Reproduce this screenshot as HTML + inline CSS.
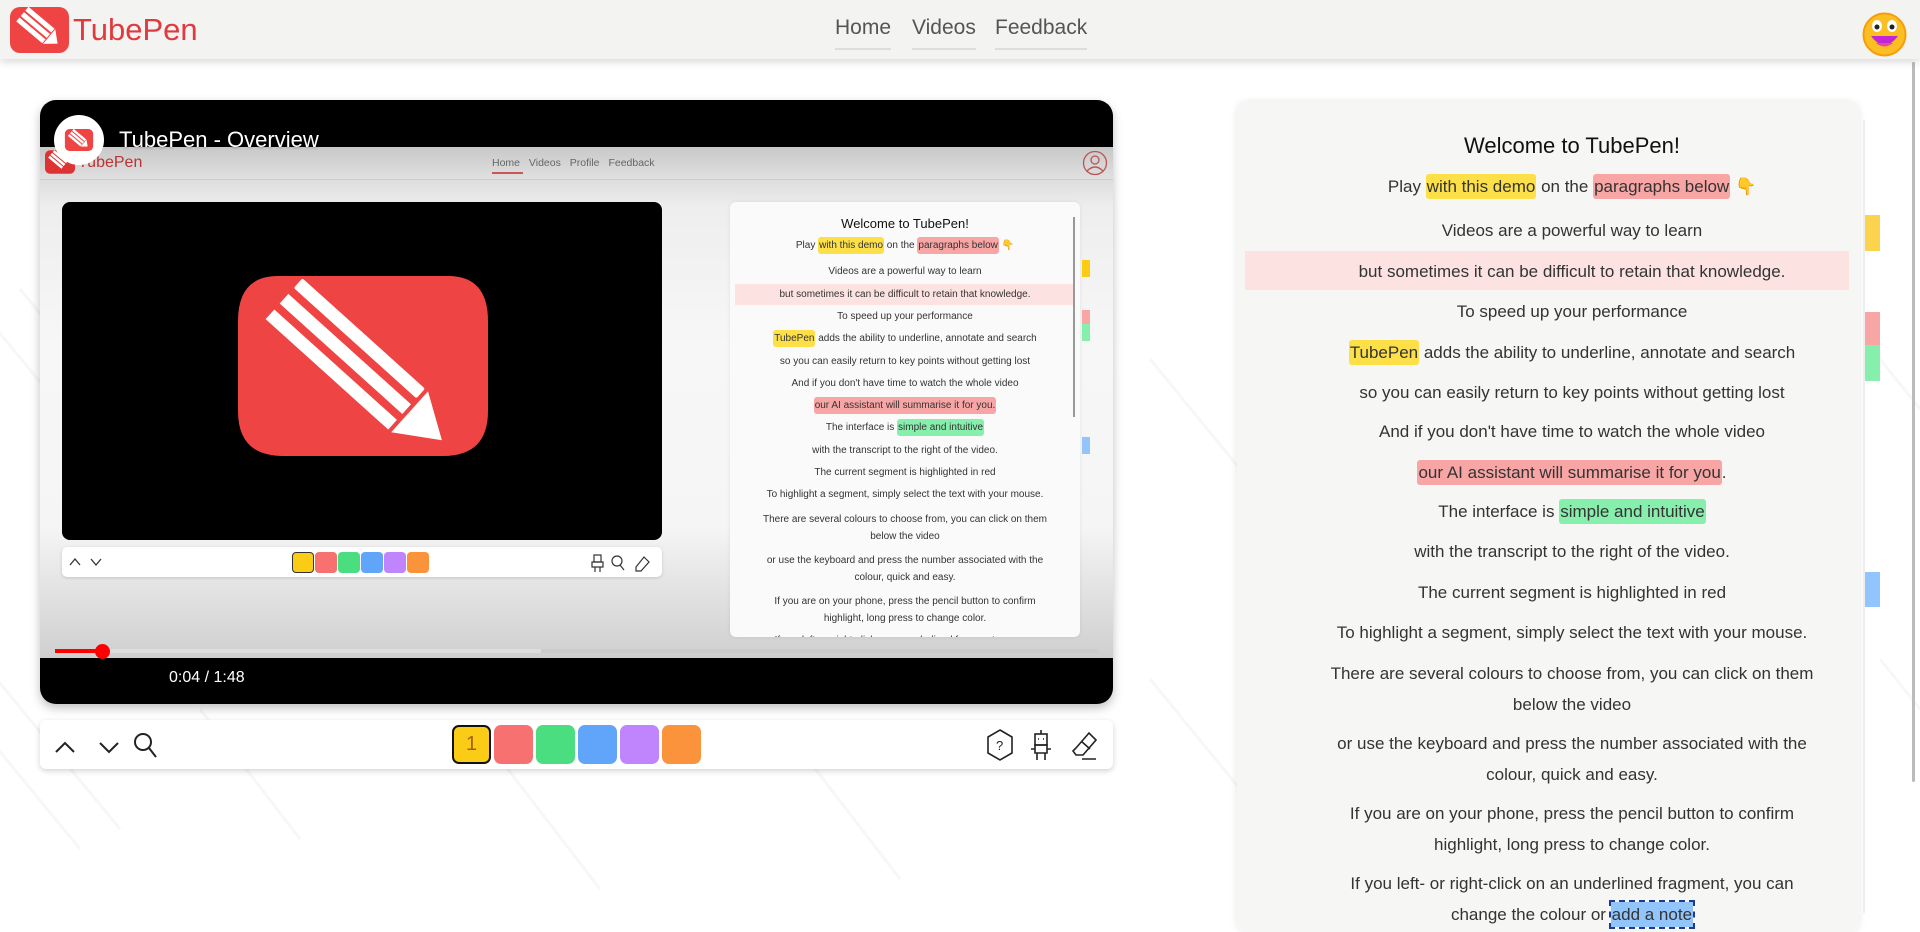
<!DOCTYPE html>
<html><head><meta charset="utf-8"><style>
*{box-sizing:border-box;margin:0;padding:0}
body{width:1920px;height:913px;overflow:hidden;background:#fff;font-family:"Liberation Sans",sans-serif;position:relative}
.abs{position:absolute}
.hdr{left:0;top:0;width:1920px;height:59px;background:#f3f3f1;box-shadow:0 3px 8px rgba(0,0,0,.15);z-index:2}
.nav a{position:absolute;top:16px;font-size:21px;color:#555;text-decoration:none;padding-bottom:8px;border-bottom:2px solid #ddd}
.vid{left:40px;top:100px;width:1073px;height:604px;background:#000;border-radius:16px;overflow:hidden;box-shadow:0 4px 10px rgba(0,0,0,.25)}
.tb{left:40px;top:720px;width:1073px;height:49px;background:#fff;border-radius:6px;box-shadow:0 2px 6px rgba(0,0,0,.18)}
.sw{position:absolute;top:5px;width:39px;height:39px;border-radius:7px}
.panel{left:1237px;top:102px;width:622px;height:830px;background:#f6f6f4;border-radius:10px;box-shadow:0 0 8px rgba(0,0,0,.1)}
.ln{position:absolute;left:0;width:622px;padding-left:48px;text-align:center;font-size:17px;color:#333;line-height:22px}
.y{background:#fde047;padding:3px 1px;border-radius:3px}
.r{background:#f8a5a5;padding:3px 1px;border-radius:3px}
.g{background:#86efac;padding:3px 1px;border-radius:3px}
.b{background:#93c5fd;padding:3px 1px;outline:2px dashed #1e3a8a}
.mln{position:absolute;left:0;width:350px;text-align:center;font-size:10px;color:#333;line-height:13px}
.msw{position:absolute;top:5px;width:22px;height:21px;border-radius:4px}
</style></head><body>
<svg class="abs" style="left:0;top:59px" width="1920" height="854">
<g stroke="#f7f7f7" stroke-width="3" fill="none">
<path d="M-20 250 L120 420 M20 230 L160 400 M-60 620 L80 790 M-20 600 L120 770 M1150 300 L1240 410 M1150 620 L1240 730 M200 650 L300 780 M500 700 L600 830 M800 690 L900 820 M1880 300 L1920 350 M1880 600 L1920 650"/>
</g></svg>

<div class="abs hdr">
<svg class="abs" style="left:10px;top:7px" width="59" height="46" viewBox="0 0 59 46"><rect x="0" y="0" width="59" height="46" rx="10" fill="#ef4444"/><g fill="#fff" transform="rotate(40 29 23)"><rect x="6" y="12" width="34" height="5"/><rect x="6" y="19" width="34" height="5"/><rect x="6" y="26" width="34" height="5"/><polygon points="41,12 52,21.5 41,31"/></g></svg>
<div class="abs" style="left:73px;top:12px;font-size:31px;color:#e03a3e">TubePen</div>
<div class="nav"><a style="left:835px">Home</a><a style="left:912px">Videos</a><a style="left:995px">Feedback</a></div>
<svg class="abs" style="left:1862px;top:12px" width="45" height="45" viewBox="0 0 45 45"><circle cx="22.5" cy="22.5" r="21" fill="#fbbf24"/><circle cx="22.5" cy="22.5" r="21" fill="none" stroke="#f59e0b" stroke-width="2"/><ellipse cx="15" cy="14" rx="5" ry="6" fill="#fff"/><ellipse cx="30" cy="14" rx="5" ry="6" fill="#fff"/><circle cx="15" cy="15" r="2.5" fill="#222"/><circle cx="30" cy="15" r="2.5" fill="#222"/><path d="M9 24 Q22.5 42 36 24 Z" fill="#c026d3"/><path d="M14 31 Q22.5 38 31 31" fill="#ec4899"/></svg>
</div>
<div class="abs" style="left:1912px;top:62px;width:3px;height:720px;background:#bbb;border-radius:2px"></div>

<div class="abs vid">
 <div class="abs" style="left:0;top:47px;width:1073px;height:511px;background:linear-gradient(#c9c9c9 0,#eee 60px,#f7f7f7 200px,#f5f5f5 380px,#cfcfcf 511px)"></div>
 <div class="abs" style="left:0;top:47px;width:1073px;height:33px;background:linear-gradient(#c8c8c8,#e0e0e0);border-bottom:1px solid #ccc"></div>
 <svg class="abs" style="left:5px;top:50px" width="30" height="24" viewBox="0 0 59 46"><rect width="59" height="46" rx="10" fill="#d33"/><g fill="#fff" transform="rotate(40 29 23)"><rect x="6" y="12" width="34" height="5"/><rect x="6" y="19" width="34" height="5"/><rect x="6" y="26" width="34" height="5"/></g></svg>
 <div class="abs" style="left:38px;top:54px;font-size:16px;color:#b33">TubePen</div>
 <div class="abs" style="left:452px;top:57px;font-size:10.5px;color:#666;word-spacing:6px">Home Videos Profile Feedback</div>
 <div class="abs" style="left:452px;top:72px;width:31px;height:2px;background:#c55"></div>
 <svg class="abs" style="left:1042px;top:50px" width="26" height="26"><circle cx="13" cy="13" r="11.5" fill="none" stroke="#b55" stroke-width="1.3"/><circle cx="13" cy="10" r="4" fill="none" stroke="#b55" stroke-width="1.3"/><path d="M5 21 Q13 13 21 21" fill="none" stroke="#b55" stroke-width="1.3"/></svg>
 <div class="abs" style="left:14px;top:15px;width:50px;height:50px;border-radius:25px;background:#fff"></div>
 <svg class="abs" style="left:24px;top:29px" width="30" height="22" viewBox="0 0 59 46"><rect width="59" height="46" rx="10" fill="#ef4444"/><g fill="#fff" transform="rotate(40 29 23)"><rect x="6" y="12" width="34" height="5"/><rect x="6" y="19" width="34" height="5"/><rect x="6" y="26" width="34" height="5"/><polygon points="41,12 52,21.5 41,31"/></g></svg>
 <div class="abs" style="left:79px;top:27px;font-size:22px;color:#fff;text-shadow:0 0 3px rgba(0,0,0,.6)">TubePen - Overview</div>
 <div class="abs" style="left:22px;top:102px;width:600px;height:338px;background:#000;border-radius:8px"></div>
 <svg class="abs" style="left:198px;top:176px" width="250" height="180" viewBox="0 0 250 180"><path d="M40 0 H210 Q250 0 250 45 V135 Q250 180 205 180 H45 Q0 180 0 135 V45 Q0 0 40 0Z" fill="#ef4444"/><g fill="#fff" transform="rotate(42 120 90)"><rect x="20" y="62" width="165" height="13" rx="2"/><rect x="20" y="83" width="165" height="13"/><rect x="20" y="104" width="165" height="13"/><polygon points="189,62 232,89 189,117"/></g></svg>
 <div class="abs" style="left:22px;top:447px;width:600px;height:30px;background:#fff;border-radius:5px;box-shadow:0 1px 3px rgba(0,0,0,.15)"></div>
 <svg class="abs" style="left:28px;top:453px" width="40" height="18" fill="none" stroke="#333" stroke-width="1.3"><path d="M2 12 L7 6 L12 12 M23 6 L28 12 L33 6"/></svg>
 <div class="msw" style="left:252px;top:452px;background:#facc15;border:1px solid #333"></div>
 <div class="msw" style="left:275px;top:452px;background:#f87171"></div>
 <div class="msw" style="left:298px;top:452px;background:#4ade80"></div>
 <div class="msw" style="left:321px;top:452px;background:#60a5fa"></div>
 <div class="msw" style="left:344px;top:452px;background:#c084fc"></div>
 <div class="msw" style="left:367px;top:452px;background:#fb923c"></div>
 <svg class="abs" style="left:550px;top:452px" width="70" height="22" fill="none" stroke="#333" stroke-width="1.2"><rect x="4" y="3" width="7" height="7"/><path d="M2 10 H13 V15 H2Z M5 15 V20 M10 15 V20"/><circle cx="27" cy="9" r="5"/><path d="M30 13 L34 18"/><path d="M46 15 L54 5 L59 10 L51 19 L46 19 Z"/></svg>
 <div class="abs" style="left:690px;top:102px;width:350px;height:435px;background:#fafafa;border-radius:6px;box-shadow:0 0 4px rgba(0,0,0,.08);overflow:hidden">
  <div class="mln" style="top:15px;font-size:13px;color:#111">Welcome to TubePen!</div>
  <div class="mln" style="top:37px">Play <span class="y">with this demo</span> on the <span class="r">paragraphs below</span> 👇</div>
  <div class="mln" style="top:63px">Videos are a powerful way to learn</div>
  <div class="abs" style="left:5px;top:82px;width:340px;height:21px;background:#fde2e2"></div>
  <div class="mln" style="top:86px">but sometimes it can be difficult to retain that knowledge.</div>
  <div class="mln" style="top:108px">To speed up your performance</div>
  <div class="mln" style="top:130px"><span class="y">TubePen</span> adds the ability to underline, annotate and search</div>
  <div class="mln" style="top:153px">so you can easily return to key points without getting lost</div>
  <div class="mln" style="top:175px">And if you don't have time to watch the whole video</div>
  <div class="mln" style="top:197px"><span class="r">our AI assistant will summarise it for you.</span></div>
  <div class="mln" style="top:219px">The interface is <span class="g">simple and intuitive</span></div>
  <div class="mln" style="top:242px">with the transcript to the right of the video.</div>
  <div class="mln" style="top:264px">The current segment is highlighted in red</div>
  <div class="mln" style="top:286px">To highlight a segment, simply select the text with your mouse.</div>
  <div class="mln" style="top:309px;line-height:17px">There are several colours to choose from, you can click on them<br>below the video</div>
  <div class="mln" style="top:350px;line-height:17px">or use the keyboard and press the number associated with the<br>colour, quick and easy.</div>
  <div class="mln" style="top:391px;line-height:17px">If you are on your phone, press the pencil button to confirm<br>highlight, long press to change color.</div>
  <div class="mln" style="top:432px">If you left- or right-click on an underlined fragment, you can</div>
  <div class="abs" style="left:343px;top:15px;width:2px;height:200px;background:#999"></div>
 </div>
 <div class="abs" style="left:1042px;top:160px;width:8px;height:17px;background:#facc15"></div>
 <div class="abs" style="left:1042px;top:210px;width:8px;height:14px;background:#f8a5a5"></div>
 <div class="abs" style="left:1042px;top:224px;width:8px;height:17px;background:#86efac"></div>
 <div class="abs" style="left:1042px;top:337px;width:8px;height:17px;background:#93c5fd"></div>
 <div class="abs" style="left:15px;top:549px;width:1043px;height:4px;background:rgba(200,200,200,.6)"></div>
 <div class="abs" style="left:15px;top:549px;width:486px;height:4px;background:#ddd"></div>
 <div class="abs" style="left:15px;top:549px;width:48px;height:4px;background:#f00"></div>
 <div class="abs" style="left:55px;top:544px;width:15px;height:15px;border-radius:8px;background:#f00"></div>
 <div class="abs" style="left:129px;top:569px;font-size:16px;color:#fff">0:04 / 1:48</div>
</div>

<div class="abs tb">
 <svg class="abs" style="left:14px;top:12px" width="110" height="28" fill="none" stroke="#222" stroke-width="2"><path d="M2 20 L11 11 L20 20"/><path d="M46 11 L55 20 L64 11"/><circle cx="89" cy="10" r="8"/><path d="M95 16 L102 25"/></svg>
 <div class="sw" style="left:412px;background:#facc15;border:2px solid #111;color:#a16207;font-size:20px;text-align:center;line-height:34px">1</div>
 <div class="sw" style="left:454px;background:#f87171"></div>
 <div class="sw" style="left:496px;background:#4ade80"></div>
 <div class="sw" style="left:538px;background:#60a5fa"></div>
 <div class="sw" style="left:580px;background:#c084fc"></div>
 <div class="sw" style="left:622px;background:#fb923c"></div>
 <svg class="abs" style="left:946px;top:8px" width="120" height="34" fill="none" stroke="#222" stroke-width="1.6"><path d="M14 2 L26 9 L26 25 L14 32 L2 25 L2 9 Z"/><text x="10" y="22" font-size="13" fill="#222" stroke="none" font-family="Liberation Sans">?</text><rect x="49" y="6" width="12" height="11"/><path d="M55 2 V6 M52 11 h1 M57 11 h1 M49 17 H61 V25 H49 Z M51 25 V32 M59 25 V32 M45 21 H49 M61 21 H65"/><path d="M90 20 L103 5 L110 12 L97 27 L90 27 L87 23 Z M95 13 L104 21 M96 31 H110"/></svg>
</div>

<div class="abs panel">
 <div class="ln" style="top:31px;font-size:22px;color:#111;line-height:26px">Welcome to TubePen!</div>
 <div class="ln" style="top:74px">Play <span class="y">with this demo</span> on the <span class="r">paragraphs below</span> 👇</div>
 <div class="ln" style="top:118px">Videos are a powerful way to learn</div>
 <div class="abs" style="left:8px;top:149px;width:604px;height:39px;background:#fde2e2"></div>
 <div class="ln" style="top:159px">but sometimes it can be difficult to retain that knowledge.</div>
 <div class="ln" style="top:199px">To speed up your performance</div>
 <div class="ln" style="top:240px"><span class="y">TubePen</span> adds the ability to underline, annotate and search</div>
 <div class="ln" style="top:280px">so you can easily return to key points without getting lost</div>
 <div class="ln" style="top:319px">And if you don't have time to watch the whole video</div>
 <div class="ln" style="top:360px"><span class="r">our AI assistant will summarise it for you</span>.</div>
 <div class="ln" style="top:399px">The interface is <span class="g">simple and intuitive</span></div>
 <div class="ln" style="top:439px">with the transcript to the right of the video.</div>
 <div class="ln" style="top:480px">The current segment is highlighted in red</div>
 <div class="ln" style="top:520px">To highlight a segment, simply select the text with your mouse.</div>
 <div class="ln" style="top:556px;line-height:31px">There are several colours to choose from, you can click on them<br>below the video</div>
 <div class="ln" style="top:626px;line-height:31px">or use the keyboard and press the number associated with the<br>colour, quick and easy.</div>
 <div class="ln" style="top:696px;line-height:31px">If you are on your phone, press the pencil button to confirm<br>highlight, long press to change color.</div>
 <div class="ln" style="top:766px;line-height:31px">If you left- or right-click on an underlined fragment, you can<br>change the colour or <span class="b">add a note</span></div>
</div>
<div class="abs" style="left:1863px;top:120px;width:2px;height:793px;background:#eee"></div>
<div class="abs" style="left:1865px;top:215px;width:15px;height:36px;background:#fcd34d"></div>
<div class="abs" style="left:1865px;top:312px;width:15px;height:33px;background:#f8a5a5"></div>
<div class="abs" style="left:1865px;top:345px;width:15px;height:36px;background:#86efac"></div>
<div class="abs" style="left:1865px;top:572px;width:15px;height:35px;background:#93c5fd"></div>
</body></html>
